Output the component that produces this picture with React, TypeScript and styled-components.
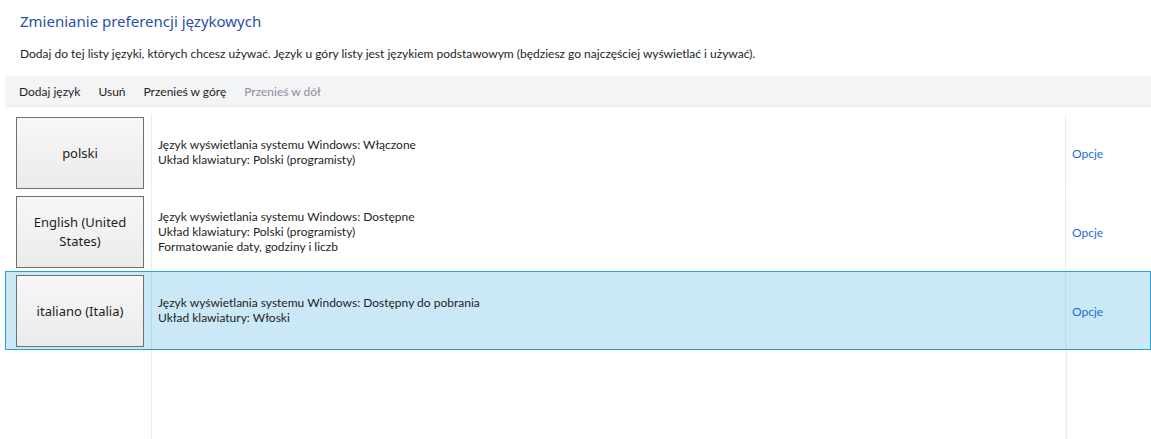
import React from 'react';
import styled, { createGlobalStyle } from 'styled-components';

interface ILanguage {
	name: string;
	details: string[];
}

const languages: ILanguage[] = [
	{
		name: 'polski',
		details: ['Język wyświetlania systemu Windows: Włączone', 'Układ klawiatury: Polski (programisty)'],
	},
	{
		name: 'English (United States)',
		details: [
			'Język wyświetlania systemu Windows: Dostępne',
			'Układ klawiatury: Polski (programisty)',
			'Formatowanie daty, godziny i liczb',
		],
	},
	{
		name: 'italiano (Italia)',
		details: ['Język wyświetlania systemu Windows: Dostępny do pobrania', 'Układ klawiatury: Włoski'],
	},
];

const GlobalStyle = createGlobalStyle`
	html, body {
		margin: 0;
		padding: 0;
		background: #ffffff;
		height: 100%;
	}

	body {
		font-family: Lato, 'Noto Sans', sans-serif;
		color: #1e1e1e;
	}

	#root {
		height: 100%;
	}
`;

const Page = styled.div`
	display: flex;
	flex-direction: column;
	height: 100%;
	overflow: hidden;
`;

const Header = styled.div`
	padding: 10px 20px 0;
`;

const Title = styled.h1`
	margin: 0;
	font-family: 'Noto Sans', sans-serif;
	font-size: 15px;
	font-weight: 400;
	line-height: 22px;
	color: #2b4fa8;
`;

const Description = styled.p`
	margin: 14px 0 0;
	font-size: 12px;
	line-height: 16px;
`;

const Toolbar = styled.div`
	display: flex;
	align-items: center;
	gap: 18px;
	height: 30px;
	margin: 14px 0 0 5px;
	padding: 0 14px;
	background: #f3f4f6;
	border-bottom: 1px solid #e8e9ec;
`;

const ToolButton = styled.span<{ $disabled?: boolean }>`
	font-size: 12px;
	color: ${(p) => (p.$disabled ? '#8f8f9c' : '#1e1e1e')};
	cursor: default;
`;

const List = styled.div`
	display: flex;
	flex-direction: column;
	flex: 1;
	margin: 6px 0 0 5px;
`;

const Row = styled.div<{ $selected?: boolean }>`
	display: grid;
	grid-template-columns: 146px 1fr 84px;
	height: 79px;
	box-sizing: border-box;
	border: 1px solid ${(p) => (p.$selected ? '#26a0da' : 'transparent')};
	background: ${(p) => (p.$selected ? '#cbe8f6' : 'transparent')};
`;

const Filler = styled.div`
	display: grid;
	grid-template-columns: 146px 1fr 84px;
	flex: 1;
	border-left: 1px solid transparent;
`;

const Cell = styled.div<{ $divider?: boolean; $selected?: boolean }>`
	display: flex;
	align-items: center;
	border-right: ${(p) =>
		p.$divider ? `1px solid ${p.$selected ? 'rgba(110, 150, 190, 0.18)' : '#e6ecf3'}` : 'none'};
`;

const ButtonCell = styled(Cell)`
	padding: 3px 0 0 10px;
	align-items: flex-start;
`;

const LangButton = styled.div`
	display: flex;
	align-items: center;
	justify-content: center;
	box-sizing: border-box;
	width: 128px;
	height: 72px;
	padding: 0 14px;
	border: 1px solid #707070;
	background: linear-gradient(#f7f7f7, #ebebeb);
	font-family: 'Noto Sans', sans-serif;
	font-size: 13px;
	line-height: 19px;
	text-align: center;
	color: #1e1e1e;
`;

const DetailsCell = styled(Cell)`
	padding-left: 6px;
	padding-bottom: 1px;
`;

const Details = styled.div`
	display: flex;
	flex-direction: column;
	font-size: 12px;
	line-height: 15px;
`;

const OptionsCell = styled(Cell)`
	padding: 2px 0 0 6px;
`;

const OptionsLink = styled.span`
	font-size: 12px;
	color: #1a6ed8;
	cursor: pointer;
`;

const App = (): JSX.Element => {
	const selectedIndex = 2;

	return (
		<>
			<GlobalStyle />
			<Page>
				<Header>
					<Title>Zmienianie preferencji językowych</Title>
					<Description>
						Dodaj do tej listy języki, których chcesz używać. Język u góry listy jest językiem podstawowym (będziesz go
						najczęściej wyświetlać i używać).
					</Description>
				</Header>
				<Toolbar>
					<ToolButton>Dodaj język</ToolButton>
					<ToolButton>Usuń</ToolButton>
					<ToolButton>Przenieś w górę</ToolButton>
					<ToolButton $disabled>Przenieś w dół</ToolButton>
				</Toolbar>
				<List>
					{languages.map((lang, i) => {
						const selected = i === selectedIndex;
						return (
							<Row key={lang.name} $selected={selected}>
								<ButtonCell $divider $selected={selected}>
									<LangButton>{lang.name}</LangButton>
								</ButtonCell>
								<DetailsCell $divider $selected={selected}>
									<Details>
										{lang.details.map((line) => (
											<span key={line}>{line}</span>
										))}
									</Details>
								</DetailsCell>
								<OptionsCell>
									<OptionsLink>Opcje</OptionsLink>
								</OptionsCell>
							</Row>
						);
					})}
					<Filler>
						<Cell $divider />
						<Cell $divider />
						<Cell />
					</Filler>
				</List>
			</Page>
		</>
	);
};

export default App;
